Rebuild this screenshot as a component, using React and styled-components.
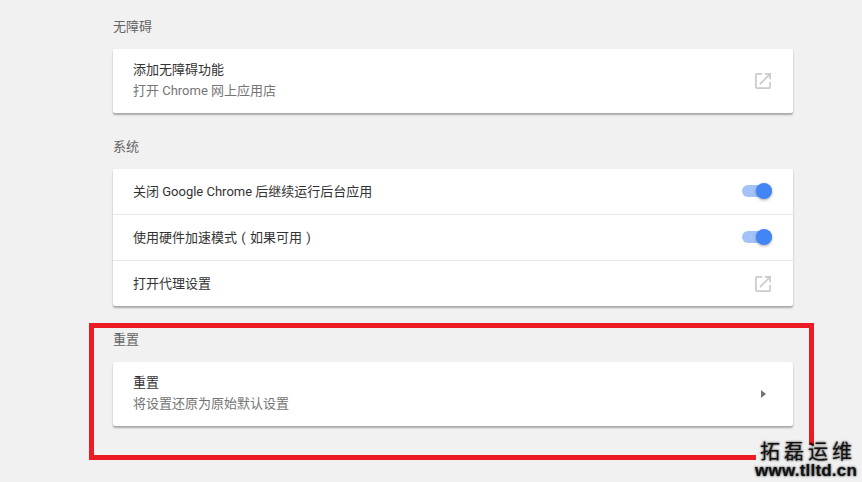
import React from 'react';
import styled, { createGlobalStyle } from "styled-components";

const GlobalStyle = createGlobalStyle`
html, body {
  margin: 0;
  padding: 0;
  background: #f1f1f1;
  overflow: hidden;
}
`;
const Page = styled.div`
  position: relative;
  width: 862px;
  height: 482px;
  overflow: hidden;
  background: #f1f1f1;
  font-family: Roboto, "Noto Sans CJK SC", sans-serif;
  font-size: 13px;
  line-height: 20px;
`;
const Column = styled.div`
  width: 680px;
  margin-left: 113px;
  padding-top: 17px;
  display: flex;
  flex-direction: column;
`;
const SectionTitle = styled.h2`
  margin: 0 0 12px;
  height: 20px;
  font-size: 13px;
  font-weight: 400;
  color: #646464;
`;
const Card = styled.div`
  display: flex;
  flex-direction: column;
  margin-bottom: ${(p) => p.$gap}px;
  background: #fff;
  border-radius: 2px;
  box-shadow: 0 2px 2px rgba(0, 0, 0, 0.3), 0 0 1px rgba(0, 0, 0, 0.1);
`;
const Row = styled.div`
  display: flex;
  align-items: center;
  justify-content: space-between;
  box-sizing: border-box;
  height: ${(p) => p.$height}px;
  padding: 0 20px;
  border-top: ${(p) => (p.$divided ? "1px solid #e9e9e9" : "none")};
`;
const Labels = styled.div`
  display: flex;
  flex-direction: column;
  margin-top: -1px;
`;
const Label = styled.div`
  color: #333;
`;
const Paren = styled.span`
  display: inline-block;
  width: 13px;
  text-align: center;
`;
const SubLabel = styled.div`
  margin-top: 1px;
  color: #757575;
`;
const Track = styled.div`
  position: relative;
  width: 30px;
  height: 12px;
  margin: 0 1px 2px 0;
  border-radius: 6px;
  background: #a3c3f8;
`;
const Knob = styled.div`
  position: absolute;
  top: -2px;
  right: 0;
  width: 16px;
  height: 16px;
  border-radius: 50%;
  background: #4285f4;
  box-shadow: 0 1px 3px rgba(0, 0, 0, 0.35);
`;
const RedFrame = styled.div`
  position: absolute;
  left: 89px;
  top: 323px;
  width: 715px;
  height: 127px;
  border: 5px solid #ed1c24;
`;
const Watermark = styled.div`
  position: absolute;
  right: 5px;
  top: 445px;
  display: flex;
  flex-direction: column;
  align-items: center;
  color: #111;
  font-family: "Liberation Sans", "Noto Sans CJK SC", sans-serif;
  text-shadow: 0 0 2px rgba(0, 0, 0, 0.6), 0 0 3px rgba(0, 0, 0, 0.4);
`;
const MarkTitle = styled.div`
  box-sizing: border-box;
  width: 100px;
  height: 16px;
  padding-left: 4px;
  background: #f1f1f1;
  font-size: 20px;
  line-height: 15px;
  letter-spacing: 4px;
  white-space: nowrap;
`;
const MarkUrl = styled.div`
  margin-top: 1px;
  font-size: 17px;
  font-weight: 700;
  line-height: 17px;
  letter-spacing: 0.2px;
`;

const ExternalIcon = () => (
  <svg width="16" height="16" viewBox="0 0 18 18" fill="#cccccc" style={{ marginRight: 2 }}>
    <path d="M2 0h6v2H2v14h14v-6h2v6a2 2 0 0 1-2 2H2a2 2 0 0 1-2-2V2a2 2 0 0 1 2-2z" />
    <path d="M11 0h7v7h-2V3.4L6.2 13.2 4.8 11.8 14.6 2H11z" />
  </svg>
);
const ArrowIcon = () => (
  <svg width="5" height="8" viewBox="0 0 5 8" fill="#757575" style={{ marginRight: 7 }}>
    <path d="M0 0 5 4 0 8z" />
  </svg>
);
const Toggle = () => (
  <Track>
    <Knob />
  </Track>
);

export default function App() {
  return (
    <Page>
      <GlobalStyle />
      <Column>
        <SectionTitle>无障碍</SectionTitle>
        <Card $gap={24}>
          <Row $height={64}>
            <Labels>
              <Label>添加无障碍功能</Label>
              <SubLabel>打开 Chrome 网上应用店</SubLabel>
            </Labels>
            <ExternalIcon />
          </Row>
        </Card>
        <SectionTitle>系统</SectionTitle>
        <Card $gap={24}>
          <Row $height={45}>
            <Label>关闭 Google Chrome 后继续运行后台应用</Label>
            <Toggle />
          </Row>
          <Row $height={46} $divided>
            <Label>使用硬件加速模式<Paren>(</Paren>如果可用<Paren>)</Paren></Label>
            <Toggle />
          </Row>
          <Row $height={46} $divided>
            <Label>打开代理设置</Label>
            <ExternalIcon />
          </Row>
        </Card>
        <SectionTitle>重置</SectionTitle>
        <Card $gap={0}>
          <Row $height={64}>
            <Labels>
              <Label>重置</Label>
              <SubLabel>将设置还原为原始默认设置</SubLabel>
            </Labels>
            <ArrowIcon />
          </Row>
        </Card>
      </Column>
      <RedFrame />
      <Watermark>
        <MarkTitle>拓磊运维</MarkTitle>
        <MarkUrl>www.tlltd.cn</MarkUrl>
      </Watermark>
    </Page>
  );
}
